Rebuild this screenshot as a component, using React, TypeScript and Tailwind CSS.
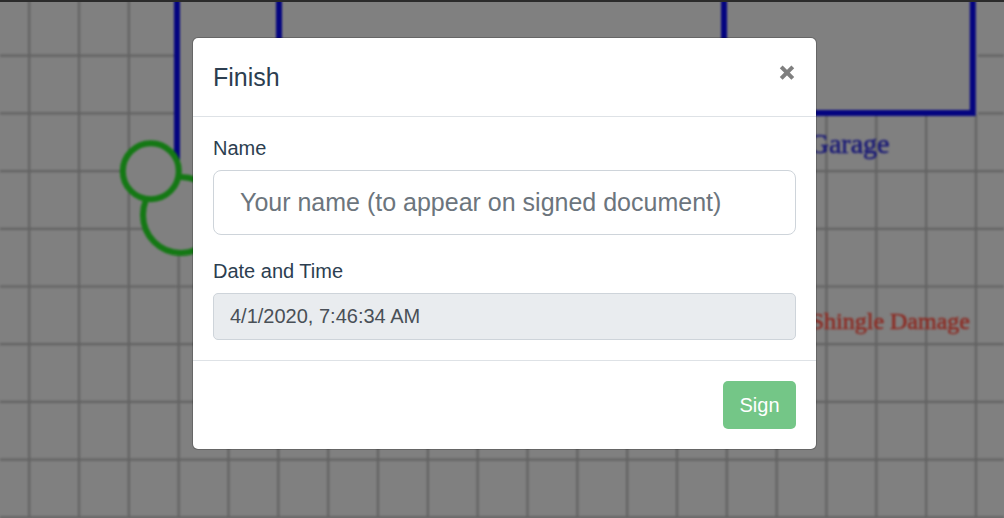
import { useState } from "react";

const columns = Array.from({ length: 20 }, (_, i) => 29.2 + i * 49.83);
const rows = Array.from({ length: 9 }, (_, i) => 55.7 + i * 57.7);

/** The roof sketch that lies behind the dialog. */
function RoofDiagram() {
  return (
    <svg className="absolute inset-0 h-full w-full" aria-hidden="true">
      <defs>
        <filter
          id="soft"
          x="0"
          y="0"
          width="100%"
          height="100%"
          colorInterpolationFilters="sRGB"
        >
          <feGaussianBlur stdDeviation="0.9" />
        </filter>
      </defs>
      <rect width="100%" height="100%" fill="#808080" />
      <g filter="url(#soft)">
        <g stroke="#626262" strokeWidth="2.2">
          {columns.map((x) => (
            <line key={x} x1={x} x2={x} y1="0" y2="100%" />
          ))}
          {rows.map((y) => (
            <line key={y} x1="0" x2="100%" y1={y} y2={y} />
          ))}
        </g>
        <path d="M177-10H978V115H300V215H177Z" fill="#808080" />
        <g fill="none" stroke="#040480" strokeWidth="6">
          <path d="M177-10V160" />
          <path d="M279-10V113H972.8V-10" />
          <path d="M724-10V113" />
        </g>
        <g fill="#808080" stroke="#147814" strokeWidth="6">
          <circle cx="181" cy="215" r="38" />
          <circle cx="150.8" cy="171.2" r="28" />
        </g>
        <g
          className="font-['Liberation_Serif',serif]"
          textAnchor="end"
          strokeWidth="0.6"
        >
          <text x="889.5" y="153" fontSize="28" fill="#1a1a76" stroke="#1a1a76">
            Garage
          </text>
          <text x="970" y="329" fontSize="24" fill="#8c2c24" stroke="#8c2c24">
            Shingle Damage
          </text>
        </g>
      </g>
      <rect width="100%" height="2" fill="#2b2b2b" />
    </svg>
  );
}

export default function App() {
  const [name, setName] = useState("");

  return (
    <div className="relative min-h-screen bg-[#808080] font-['Liberation_Sans',Arial,sans-serif] text-[20px] text-[#2c3e50]">
      <RoofDiagram />
      <div className="relative flex min-h-screen items-start justify-center pt-[37px] pl-[5px]">
        <div
          role="dialog"
          aria-labelledby="dialog-title"
          className="w-full max-w-[625px] rounded-md border border-black/20 bg-white bg-clip-padding"
        >
          <header className="flex items-start justify-between border-b border-[#dee2e6] p-5">
            <h5 id="dialog-title" className="text-[25px] leading-[38px]">
              Finish
            </h5>
            <button
              type="button"
              aria-label="Close"
              className="flex h-[30px] w-[18px] items-center justify-center text-[#7f7f7f]"
            >
              <svg width="18" height="18" viewBox="0 0 18 18" aria-hidden="true">
                <path
                  d="M3.2 2.8L14.8 14.4M14.8 2.8L3.2 14.4"
                  stroke="currentColor"
                  strokeWidth="4"
                />
              </svg>
            </button>
          </header>
          <form onSubmit={(e) => e.preventDefault()}>
            <div className="flex flex-col gap-[25px] p-5">
              <div className="flex flex-col gap-[10px]">
                <label htmlFor="name" className="leading-[23px]">
                  Name
                </label>
                <input
                  id="name"
                  type="text"
                  value={name}
                  onChange={(e) => setName(e.target.value)}
                  placeholder="Your name (to appear on signed document)"
                  className="h-[65px] w-full rounded-lg border border-[#ced4da] bg-white px-[26px] text-[25px] text-[#495057] placeholder:text-[#6c757d]"
                />
              </div>
              <div className="flex flex-col gap-[10px]">
                <label htmlFor="signed-at" className="leading-[23px]">
                  Date and Time
                </label>
                <input
                  id="signed-at"
                  type="text"
                  readOnly
                  value="4/1/2020, 7:46:34 AM"
                  className="h-[47px] w-full rounded-[5px] border border-[#ced4da] bg-[#e9ecef] px-4 text-[20px] text-[#495057]"
                />
              </div>
            </div>
            <footer className="flex justify-end border-t border-[#dee2e6] p-5">
              <button
                type="submit"
                className="h-12 min-w-[73px] rounded-[5px] bg-[#74c687] px-4 text-[20px] text-white"
              >
                Sign
              </button>
            </footer>
          </form>
        </div>
      </div>
    </div>
  );
}
